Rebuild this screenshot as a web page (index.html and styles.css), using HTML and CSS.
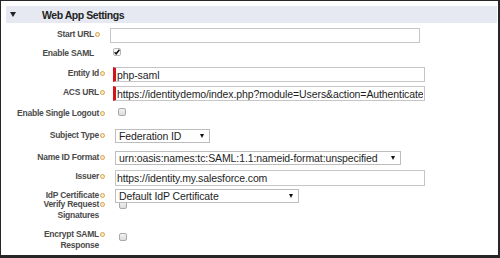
FILE: index.html
```html
<!DOCTYPE html>
<html lang="en">
<head>
  <meta charset="UTF-8">
  <title>Web App Settings</title>
  <link rel="stylesheet" href="styles.css">
</head>
<body>
  <div class="panel">
    <div class="section-head">
      <span class="twisty"></span>
      <h2>Web App Settings</h2>
    </div>

    <div class="row narrow row-start">
      <div class="label"><span>Start URL</span><i class="info"></i></div>
      <input class="text" type="text" value="">
    </div>
    <div class="row narrow row-saml">
      <div class="label noicon"><span>Enable SAML</span></div>
      <span class="check checked">
        <svg viewBox="0 0 8 8" width="8" height="8"><path d="M1.6 4.2 L3.2 5.8 L6.4 1.8" fill="none" stroke="#111" stroke-width="1.5"/></svg>
      </span>
    </div>
    <div class="row row-entity">
      <div class="label"><span>Entity Id</span><i class="info"></i></div>
      <input class="text req" type="text" value="php-saml">
    </div>
    <div class="row row-acs">
      <div class="label"><span>ACS URL</span><i class="info"></i></div>
      <input class="text req" type="text" value="https://identitydemo/index.php?module=Users&amp;action=Authenticate">
    </div>
    <div class="row row-logout">
      <div class="label"><span>Enable Single Logout</span><i class="info"></i></div>
      <span class="check"></span>
    </div>
    <div class="row row-subject">
      <div class="label"><span>Subject Type</span><i class="info"></i></div>
      <div class="select sel-subject">Federation ID</div>
    </div>
    <div class="row row-nameid">
      <div class="label"><span>Name ID Format</span><i class="info"></i></div>
      <div class="select sel-nameid">urn:oasis:names:tc:SAML:1.1:nameid-format:unspecified</div>
    </div>
    <div class="row row-issuer">
      <div class="label"><span>Issuer</span><i class="info"></i></div>
      <input class="text tall" type="text" value="https://identity.my.salesforce.com">
    </div>
    <div class="row row-cert">
      <div class="label"><span>IdP Certificate</span><i class="info"></i></div>
      <div class="select sel-cert">Default IdP Certificate</div>
    </div>
    <div class="row row-verify">
      <div class="label multi"><span>Verify Request<br>Signatures</span><i class="info"></i></div>
      <span class="check"></span>
    </div>
    <div class="row row-encrypt">
      <div class="label multi"><span>Encrypt SAML<br>Response</span><i class="info"></i></div>
      <span class="check"></span>
    </div>
  </div>
</body>
</html>
```

FILE: styles.css
```css
body {
  margin: 0;
  font-family: "Liberation Sans", Arial, sans-serif;
  background: #fff;
}
.panel {
  box-sizing: border-box;
  width: 500px;
  height: 258px;
  border: 1px solid #262626;
  border-right-width: 2px;
  border-bottom-width: 3px;
  padding: 5px 1px 0 5px;
}
.section-head {
  display: flex;
  align-items: center;
  height: 17px;
  background: #e6e9f1;
}
.twisty {
  width: 0;
  height: 0;
  margin-left: 4px;
  border-left: 3.5px solid transparent;
  border-right: 3.5px solid transparent;
  border-top: 5px solid #222;
}
.section-head h2 {
  margin: 0 0 0 26px;
  font-size: 10.5px;
  font-weight: bold;
  letter-spacing: -0.45px;
  color: #222;
}
.row {
  display: flex;
  align-items: flex-start;
}
.label {
  flex-shrink: 0;
  box-sizing: border-box;
  width: 99px;
  padding-top: 1px;
  display: flex;
  justify-content: flex-end;
  align-items: flex-start;
  font-size: 8.5px;
  font-weight: bold;
  letter-spacing: -0.25px;
  line-height: 11px;
  color: #4b4b4b;
  text-align: right;
}
.narrow .label {
  width: 94px;
}
.label.noicon {
  padding-right: 6px;
}
.label.multi {
  line-height: 10.5px;
}
.info {
  box-sizing: border-box;
  width: 5px;
  height: 5px;
  margin: 3px 0 0 1px;
  border-radius: 50%;
  border: 1px solid #d8a24a;
  background: #fbeacb;
}
.text {
  box-sizing: border-box;
  width: 310px;
  height: 15px;
  margin: 0 0 0 10px;
  padding: 0 1px;
  border: 1px solid #c6c6c6;
  outline: none;
  font-family: "Liberation Sans", Arial, sans-serif;
  font-size: 10.5px;
  letter-spacing: -0.1px;
  color: #1e1e1e;
}
.text.req {
  width: 312px;
  margin-left: 8px;
  border-left: 3px solid #d4141c;
}
.text.tall {
  height: 16px;
}
.check {
  box-sizing: border-box;
  display: block;
  width: 8px;
  height: 8px;
  margin: 1px 0 0 13px;
  border: 1px solid #a9a9a9;
  border-radius: 2px;
  background: linear-gradient(#f3f3f3, #dcdcdc);
}
.check.checked {
  background: #fff;
  border-color: #b5b5b5;
}
.check svg {
  display: block;
  margin: -1px 0 0 -1px;
}
.select {
  position: relative;
  box-sizing: border-box;
  height: 14px;
  margin-left: 10px;
  padding-left: 3px;
  border: 1px solid #bdbdbd;
  background: #fff;
  font-size: 10.5px;
  letter-spacing: -0.1px;
  line-height: 12px;
  color: #1e1e1e;
  white-space: nowrap;
}
.select::after {
  content: "";
  position: absolute;
  right: 5px;
  top: 4px;
  border-left: 2.5px solid transparent;
  border-right: 2.5px solid transparent;
  border-top: 4px solid #111;
}
.sel-subject { width: 95px; }
.sel-nameid { width: 286px; }
.sel-cert { width: 184px; }

.row-start { margin-top: 5px; }
.row-saml { margin-top: 4px; }
.row-entity { margin-top: 8px; }
.row-acs { margin-top: 4px; }
.row-logout { margin-top: 6px; }
.row-subject { margin-top: 10px; }
.row-nameid { margin-top: 8px; }
.row-issuer { margin-top: 5px; }
.row-cert { margin-top: 3px; }
.row-verify { margin-top: -5px; }
.row-verify .check { margin-top: 3px; margin-left: 14px; }
.row-encrypt { margin-top: 8px; }
.row-encrypt .check { margin-top: 5px; margin-left: 14px; }
```
